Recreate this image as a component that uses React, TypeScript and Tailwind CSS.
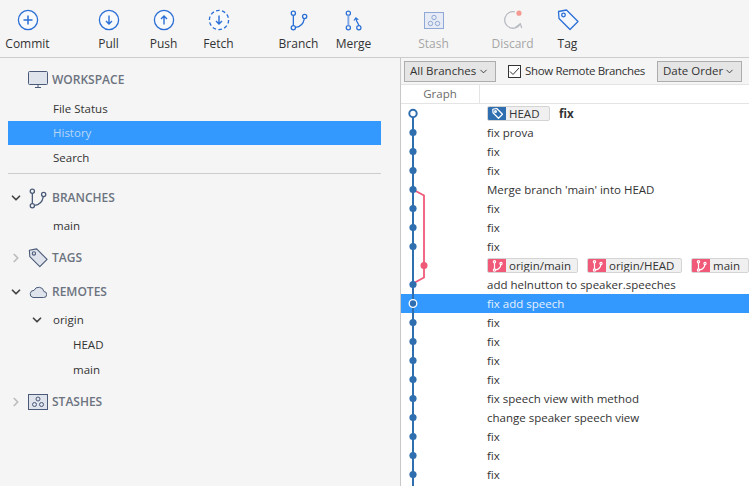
import type { ReactNode } from 'react';
import { ChevronDown, ChevronRight } from 'lucide-react';

const BLUE = '#2a6fd6';
const SLATE = '#4a5a78';

function BranchGlyph({ color, fill = 'none' }: { color: string; fill?: string }) {
  return (
    <svg width="18" height="21" viewBox="0 0 22 26" fill={fill} stroke={color} strokeWidth="1.6">
      <circle cx="4" cy="4" r="2.6" />
      <circle cx="4" cy="22" r="2.6" />
      <circle cx="18" cy="8" r="2.6" />
      <path d="M4 6.6v12.8" />
      <path d="M6.6 21.5c6-.5 10-5 11-10.8" fill="none" />
    </svg>
  );
}

function ToolIcon({ name }: { name: string }) {
  if (name === 'commit' || name === 'pull' || name === 'push' || name === 'fetch') {
    return (
      <svg width="22" height="22" viewBox="0 0 22 22" fill="#fff" stroke={BLUE} strokeWidth="1.3">
        <circle cx="11" cy="11" r="9.6" strokeDasharray={name === 'fetch' ? '3.6 2.4' : undefined} fill="#f8f9fb" />
        {name === 'commit' && <path d="M11 6.5v9M6.5 11h9" strokeWidth="1.5" />}
        {(name === 'pull' || name === 'fetch') && <path d="M11 6.5v8.5M8 12l3 3 3-3" fill="none" strokeWidth="1.4" />}
        {name === 'push' && <path d="M11 15.5V7M8 10l3-3 3 3" fill="none" strokeWidth="1.4" />}
      </svg>
    );
  }
  if (name === 'branch') return <BranchGlyph color={BLUE} />;
  if (name === 'merge') {
    return (
      <svg width="18" height="21" viewBox="0 0 22 26" fill="none" stroke={BLUE} strokeWidth="1.5">
        <circle cx="4" cy="4" r="2.6" />
        <circle cx="4" cy="22" r="2.6" />
        <circle cx="17" cy="22" r="2.6" />
        <path d="M4 6.6v12.8" stroke="#7ea6e6" strokeWidth="2.4" />
        <path d="M17 19.4c0-3-3-4-3.4-8M11 13l2.4-3.2 3 2.4" />
      </svg>
    );
  }
  if (name === 'stash') {
    return (
      <svg width="20" height="17" viewBox="0 0 20 17" fill="#e6ebf5" stroke="#8fa8d6" strokeWidth="1">
        <rect x="0.5" y="0.5" width="19" height="16" />
        <circle cx="10" cy="5.5" r="2.2" fill="none" />
        <circle cx="6.5" cy="11.5" r="2.2" fill="none" />
        <circle cx="13.5" cy="11.5" r="2.2" fill="none" />
      </svg>
    );
  }
  if (name === 'discard') {
    return (
      <svg width="22" height="22" viewBox="0 0 24 24" fill="none" stroke="#b8bcc2" strokeWidth="1.4">
        <path d="M14 3.2A9 9 0 1 0 20 16" />
        <path d="M14.5 20.2l5.5-4 1.5 4.5" />
        <circle cx="18.5" cy="4.5" r="2.8" fill="#f59a92" stroke="none" />
      </svg>
    );
  }
  return (
    <svg width="22" height="22" viewBox="0 0 22 22" fill="#f4f7fc" stroke={BLUE} strokeWidth="1.3">
      <path d="M1.5 2.5l8-1.5L21 12.5l-8 8L2 9.5z" strokeLinejoin="round" />
      <circle cx="6.5" cy="6" r="1.8" />
    </svg>
  );
}

function ToolButton({ icon, label, tone, className }: { icon: string; label: string; tone: string; className?: string }) {
  return (
    <div className={`flex h-[57px] w-[55px] shrink-0 flex-col items-center pt-[4px] ${className ?? ''}`}>
      <div className="flex h-[32px] items-center justify-center">
        <ToolIcon name={icon} />
      </div>
      <div className={`text-[12px] leading-[16px] ${tone}`}>{label}</div>
    </div>
  );
}

function SectionHead({ icon, label, chevron }: { icon: ReactNode; label: string; chevron?: 'open' | 'closed' }) {
  return (
    <div className="flex h-full items-center">
      <div className="flex w-[28px] justify-center pl-[4px]">
        {chevron === 'open' && <ChevronDown size={14} strokeWidth={3} className="text-[#444]" />}
        {chevron === 'closed' && <ChevronRight size={14} strokeWidth={3} className="text-[#bdbdbd]" />}
      </div>
      <div className="flex w-[24px] justify-center pr-[4px]">{icon}</div>
      <span className="text-[12px] font-semibold text-[#6c7380]">{label}</span>
    </div>
  );
}

function Item({ label, pad, className }: { label: string; pad: string; className?: string }) {
  return <div className={`flex h-[25px] items-center text-[11.5px] text-[#333] ${pad} ${className ?? ''}`}>{label}</div>;
}

function Sidebar() {
  return (
    <div className="h-[429px] w-[400px] shrink-0 overflow-hidden bg-[#f5f5f5]">
      <div className="h-[44px] pt-[10px]">
        <div className="h-[24px]">
          <SectionHead
            label="WORKSPACE"
            icon={
              <svg width="20" height="18" viewBox="0 0 20 18" fill="#dfe3ec" stroke={SLATE} strokeWidth="1">
                <rect x="0.5" y="0.5" width="19" height="13" rx="1" />
                <path d="M7 16.5h6M10 14v2" fill="none" />
              </svg>
            }
          />
        </div>
      </div>
      <Item label="File Status" pad="pl-[53px]" className="-mt-[6px]" />
      <div className="ml-[8px] flex h-[24px] w-[373px] items-center bg-[#3399ff] pl-[45px] text-[11.5px] text-[#b9d6f5]">History</div>
      <Item label="Search" pad="pl-[53px]" />
      <div className="ml-[8px] mt-[3px] h-px w-[373px] bg-[#cccccc]" />
      <div className="mt-[12px] h-[24px]">
        <SectionHead chevron="open" label="BRANCHES" icon={<BranchGlyph color={SLATE} />} />
      </div>
      <Item label="main" pad="pl-[53px]" className="mt-[3px]" />
      <div className="mt-[8px] h-[24px]">
        <SectionHead
          chevron="closed"
          label="TAGS"
          icon={
            <svg width="20" height="20" viewBox="0 0 22 22" fill="#dfe3ec" stroke={SLATE} strokeWidth="1.2">
              <path d="M1.5 2.5l8-1.5L21 12.5l-8 8L2 9.5z" strokeLinejoin="round" />
              <circle cx="6.5" cy="6" r="1.8" />
            </svg>
          }
        />
      </div>
      <div className="mt-[10px] h-[24px]">
        <SectionHead
          chevron="open"
          label="REMOTES"
          icon={
            <svg width="18" height="12" viewBox="0 0 18 12" fill="#dfe3ec" stroke={SLATE} strokeWidth="1">
              <path d="M4 11.5h10.5a3 3 0 0 0 .4-6A5.2 5.2 0 0 0 5 4.4 3.6 3.6 0 0 0 4 11.5z" />
            </svg>
          }
        />
      </div>
      <div className="mt-[3px] flex h-[25px] items-center text-[11.5px] text-[#333]">
        <div className="flex w-[53px] justify-end pr-[9px]">
          <ChevronDown size={14} strokeWidth={3} className="text-[#444]" />
        </div>
        origin
      </div>
      <Item label="HEAD" pad="pl-[73px]" />
      <Item label="main" pad="pl-[73px]" />
      <div className="mt-[8px] h-[24px]">
        <SectionHead
          chevron="closed"
          label="STASHES"
          icon={
            <svg width="20" height="16" viewBox="0 0 20 16" fill="#dfe3ec" stroke={SLATE} strokeWidth="1">
              <rect x="0.5" y="0.5" width="19" height="15" />
              <circle cx="10" cy="5" r="2" fill="none" />
              <circle cx="6.5" cy="10.5" r="2" fill="none" />
              <circle cx="13.5" cy="10.5" r="2" fill="none" />
            </svg>
          }
        />
      </div>
    </div>
  );
}

function RefBadge({ label, tone, width, icon }: { label: string; tone: string; width: string; icon: ReactNode }) {
  return (
    <div className={`mr-[9px] flex h-[15px] shrink-0 overflow-hidden rounded-[2px] border border-[#d4d4d4] bg-[#f0f0f0] ${width}`}>
      <div className={`flex w-[18px] shrink-0 items-center justify-center ${tone}`}>{icon}</div>
      <span className="whitespace-nowrap pl-[3px] text-[11.5px] leading-[13px] text-[#333]">{label}</span>
    </div>
  );
}

const branchIcon = (
  <svg width="11" height="12" viewBox="0 0 11 12" fill="none" stroke="#fff" strokeWidth="1.2">
    <circle cx="2.5" cy="1.8" r="1.1" />
    <circle cx="2.5" cy="10" r="1.1" />
    <circle cx="9" cy="3.5" r="1.1" />
    <path d="M2.5 3v6M3.6 9.8c3-.3 4.8-2.5 5.3-5.2" />
  </svg>
);

const tagIcon = (
  <svg width="11" height="11" viewBox="0 0 22 22" fill="none" stroke="#fff" strokeWidth="2.4">
    <path d="M1.5 2.5l8-1.5L21 12.5l-8 8L2 9.5z" strokeLinejoin="round" />
    <circle cx="7" cy="7" r="1.8" />
  </svg>
);

const commits = [
  'fix prova', 'fix', 'fix', "Merge branch 'main' into HEAD", 'fix', 'fix', 'fix', '',
  'add helnutton to speaker.speeches', 'fix add speech', 'fix', 'fix', 'fix', 'fix',
  'fix speech view with method', 'change speaker speech view', 'fix', 'fix', 'fix',
];

function Graph() {
  const rowY = (i: number) => 9.5 + i * 19;
  return (
    <svg className="absolute left-0 top-0" width="30" height="382" viewBox="0 0 30 382" fill="none">
      <path d={`M12 ${rowY(0)}V382`} stroke="#2f6fb0" strokeWidth="2" />
      <path d={`M12 ${rowY(4)}l11 6V${rowY(9) - 7}l-11 6`} stroke="#f05a78" strokeWidth="1.8" />
      {commits.map((_, n) => {
        const i = n + 1;
        if (i === 8) return <circle key={i} cx="23" cy={rowY(i)} r="3.5" fill="#f05a78" />;
        if (i === 10) return <circle key={i} cx="12" cy={rowY(i)} r="3.8" fill="#2f6fb0" stroke="#fff" strokeWidth="1.3" />;
        return <circle key={i} cx="12" cy={rowY(i)} r="3.6" fill="#2f6fb0" />;
      })}
      <circle cx="12" cy={rowY(0)} r="3.7" fill="#fff" stroke="#2f6fb0" strokeWidth="2" />
    </svg>
  );
}

function HistoryPane() {
  return (
    <div className="h-[429px] min-w-0 flex-1 overflow-hidden border-l border-[#c8c8c8] bg-white">
      <div className="flex h-[26px] items-center bg-[#f5f5f5] pl-[3px]">
        <div className="flex h-[21px] w-[92px] items-center justify-between whitespace-nowrap border border-[#adadad] bg-[#e5e5e5] pl-[5px] pr-[6px] text-[11.5px] text-[#333]">
          All Branches
          <ChevronDown size={11} strokeWidth={2} />
        </div>
        <div className="ml-[12px] flex h-[13px] w-[13px] items-center justify-center border border-[#333] bg-white">
          <svg width="11" height="9" viewBox="0 0 11 9" fill="none" stroke="#333" strokeWidth="1">
            <path d="M1 4.5l3 3 6-6.5" />
          </svg>
        </div>
        <span className="ml-[4px] w-[132px] whitespace-nowrap text-[11.5px] tracking-[-0.35px] text-[#333]">Show Remote Branches</span>
        <div className="flex h-[21px] w-[85px] items-center justify-between whitespace-nowrap border border-[#adadad] bg-[#e5e5e5] pl-[5px] pr-[6px] text-[11.5px] text-[#333]">
          Date Order
          <ChevronDown size={11} strokeWidth={2} />
        </div>
      </div>
      <div className="flex h-[20px] border-b border-t border-[#e4e4e4] bg-white">
        <div className="flex w-[79px] items-center justify-center border-r border-[#e4e4e4] text-[11.5px] text-[#6b6b6b]">Graph</div>
      </div>
      <div className="relative">
        <div className="flex h-[19px] items-center pl-[86px]">
          <RefBadge label="HEAD" tone="bg-[#2f6fb0]" width="w-[63px]" icon={tagIcon} />
          <span className="text-[11.5px] font-bold text-[#333]">fix</span>
        </div>
        {commits.map((c, i) => {
          if (i === 7) {
            return (
              <div key={i} className="flex h-[19px] items-center pl-[86px]">
                <RefBadge label="origin/main" tone="bg-[#f05a78]" width="w-[91px]" icon={branchIcon} />
                <RefBadge label="origin/HEAD" tone="bg-[#f05a78]" width="w-[95px]" icon={branchIcon} />
                <RefBadge label="main" tone="bg-[#f05a78]" width="w-[58px]" icon={branchIcon} />
              </div>
            );
          }
          return (
            <div
              key={i}
              className={`flex h-[19px] items-center pl-[86px] text-[11.5px] ${i === 9 ? 'bg-[#3399ff] text-[#e6f0fb]' : 'text-[#333]'}`}
            >
              {c}
            </div>
          );
        })}
        <Graph />
      </div>
    </div>
  );
}

export default function App() {
  return (
    <div className="h-[486px] w-[749px] overflow-hidden bg-[#f5f5f5] font-['Open_Sans',sans-serif]">
      <div className="flex h-[57px] bg-[#f5f5f5]">
        <ToolButton icon="commit" label="Commit" tone="text-[#333]" />
        <ToolButton icon="pull" label="Pull" tone="text-[#333]" className="ml-[26px]" />
        <ToolButton icon="push" label="Push" tone="text-[#333]" />
        <ToolButton icon="fetch" label="Fetch" tone="text-[#333]" />
        <ToolButton icon="branch" label="Branch" tone="text-[#333]" className="ml-[25px]" />
        <ToolButton icon="merge" label="Merge" tone="text-[#333]" />
        <ToolButton icon="stash" label="Stash" tone="text-[#a6a6a6]" className="ml-[25px]" />
        <ToolButton icon="discard" label="Discard" tone="text-[#a6a6a6]" className="ml-[24px]" />
        <ToolButton icon="tag" label="Tag" tone="text-[#333]" />
      </div>
      <div className="flex border-t border-[#cccccc]">
        <Sidebar />
        <HistoryPane />
      </div>
    </div>
  );
}
